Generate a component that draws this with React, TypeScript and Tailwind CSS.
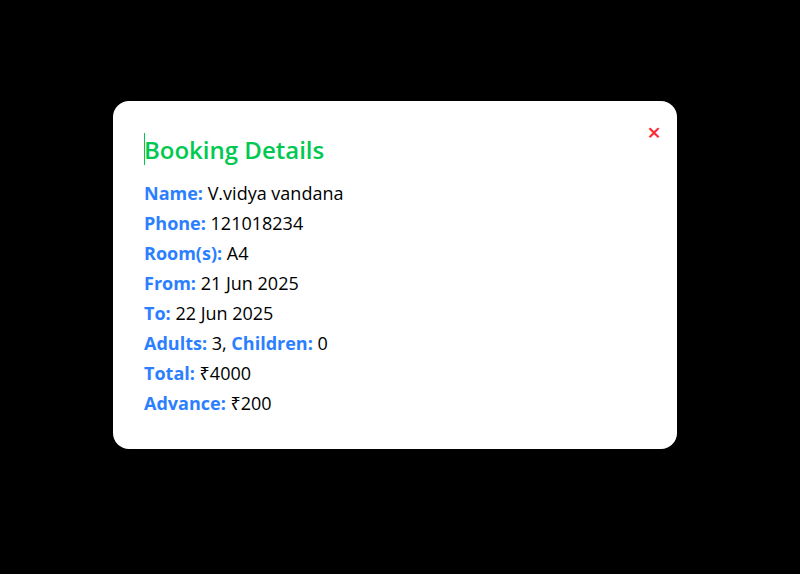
import React from 'react';

export default function App() {
  const rows: [string, string][] = [
    ['Name:', 'V.vidya vandana'],
    ['Phone:', '121018234'],
    ['Room(s):', 'A4'],
    ['From:', '21 Jun 2025'],
    ['To:', '22 Jun 2025'],
  ];

  return (
    <div
      className="w-[800px] h-[574px] bg-black flex items-start justify-start pt-[101px] pl-[113px]"
      style={{ fontFamily: '"Open Sans", "Noto Sans", sans-serif' }}
    >
      <div className="relative w-[564px] bg-white rounded-2xl px-[31px] pt-8 pb-[31px]">
        <button className="absolute top-[19px] right-[16px] text-red-500 text-[24px] font-semibold leading-none">
          ×
        </button>

        <h2 className="relative text-2xl leading-8 font-semibold text-green-500 mb-3 pt-px">
          <span className="absolute left-0 top-0 w-px h-8 bg-green-500" />
          Booking Details
        </h2>

        <div className="text-lg leading-[30px] text-black">
          {rows.map(([label, value]) => (
            <p key={label}>
              <span className="font-bold text-blue-500">{label}</span> {value}
            </p>
          ))}
          <p>
            <span className="font-bold text-blue-500">Adults:</span> 3,{' '}
            <span className="font-bold text-blue-500">Children:</span> 0
          </p>
          <p>
            <span className="font-bold text-blue-500">Total:</span> ₹4000
          </p>
          <p>
            <span className="font-bold text-blue-500">Advance:</span> ₹200
          </p>
        </div>
      </div>
    </div>
  );
}
